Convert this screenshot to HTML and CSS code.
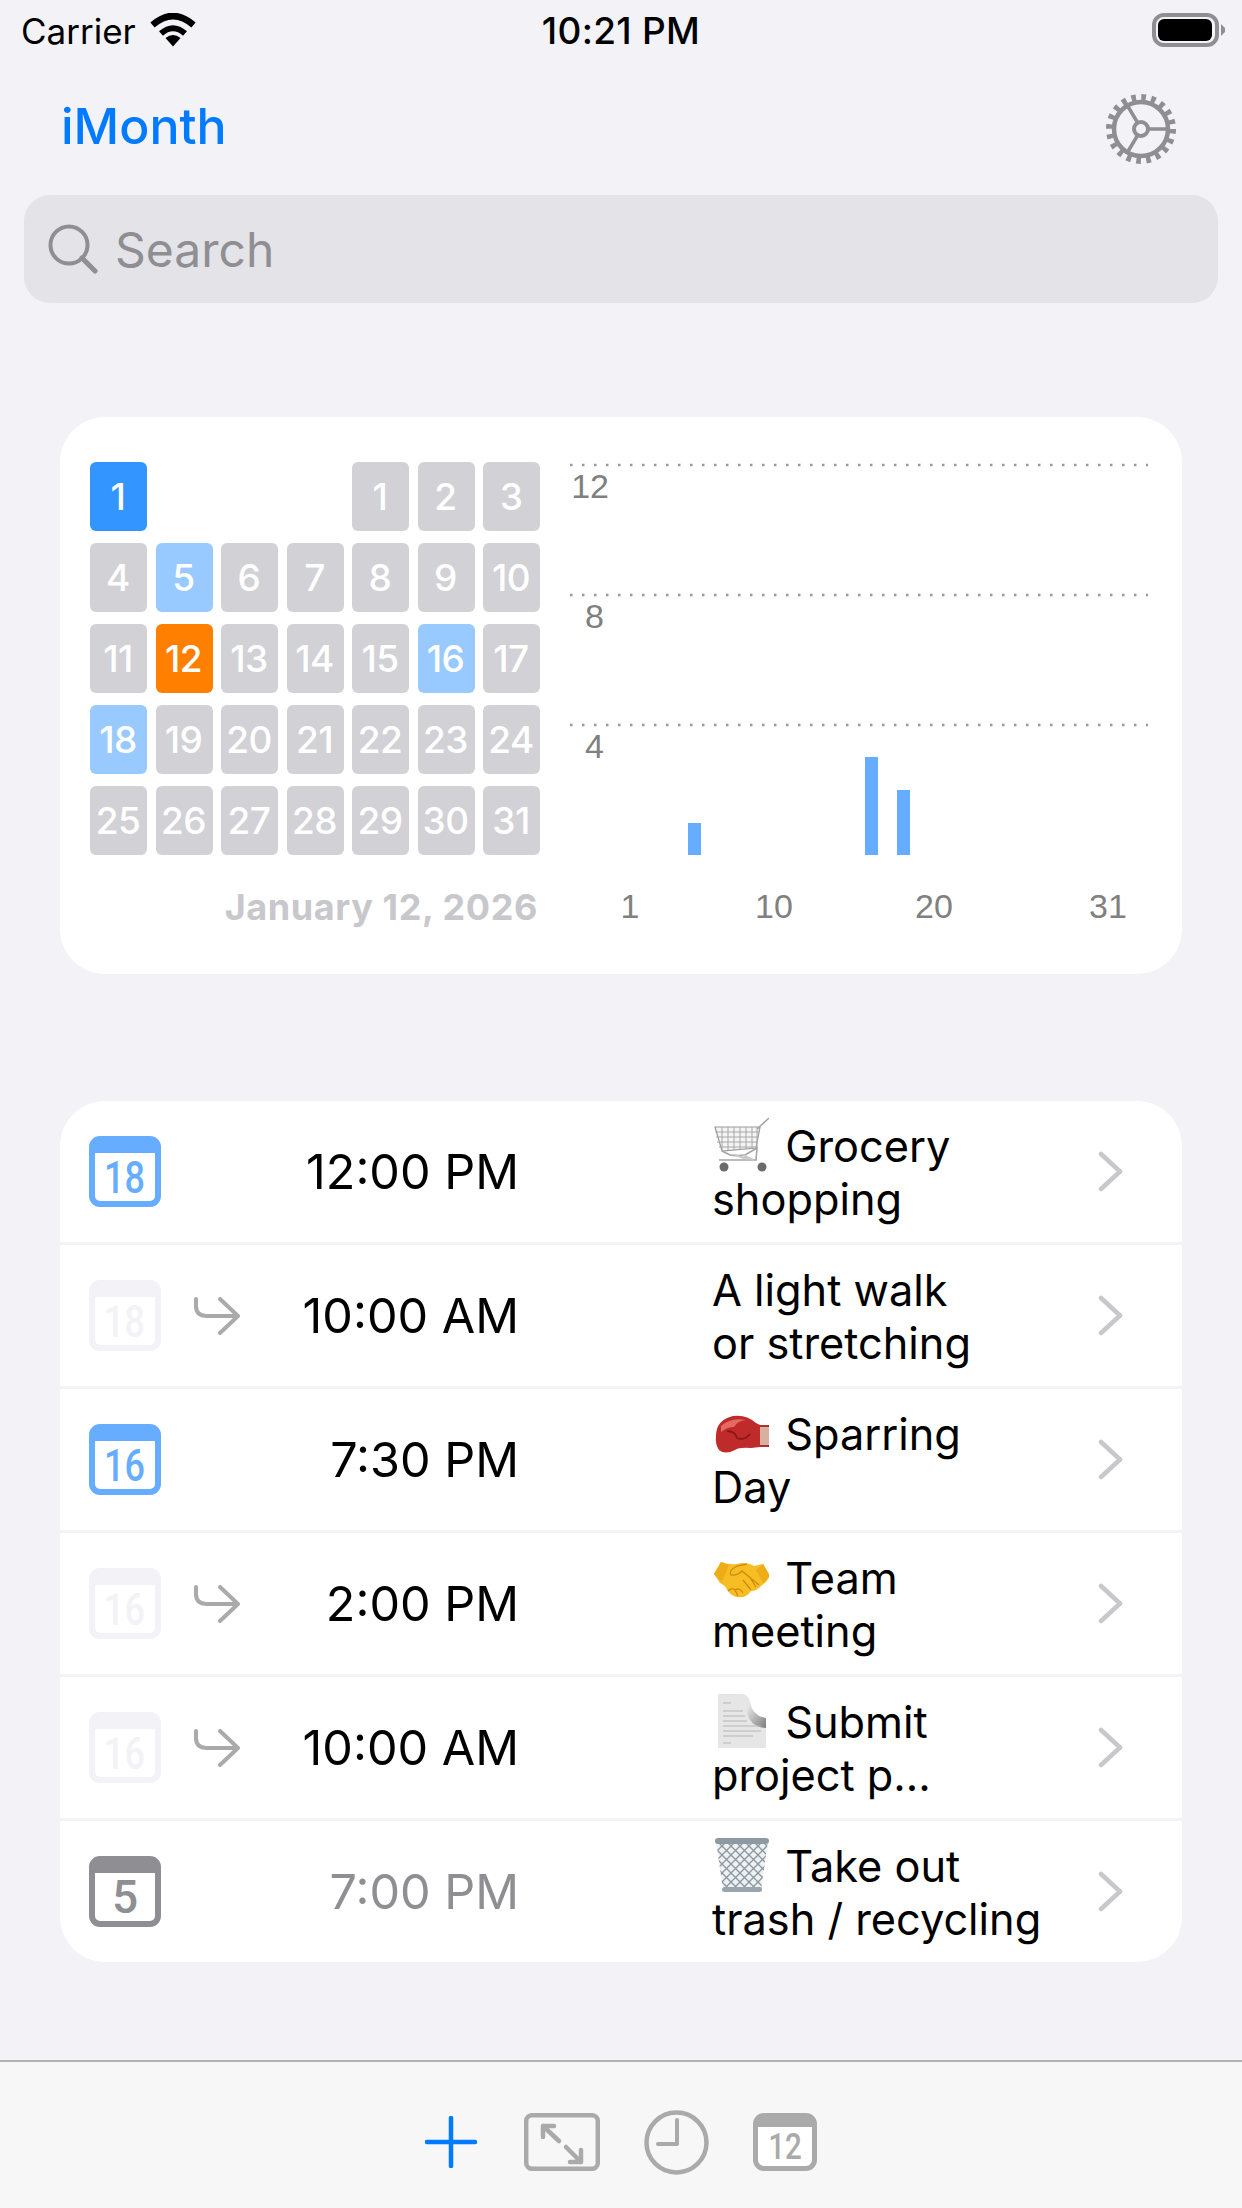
FILE: index.html
```html
<!DOCTYPE html>
<html>
    <head>
        <title>iMonth</title>
        <link rel="stylesheet" href="styles.css">
    </head>
    <body>
        <svg class="defs">
            <defs>
                <path id="chevron" d="M3 3 L22 20.5 L3 38" fill="none" stroke="#c7c7cc" stroke-width="4.5" stroke-linecap="round" stroke-linejoin="round"/>
                <path id="repeat" d="M3 2 V9 Q3 19 14 19 H44 M27 2 L45 19 L27 36" fill="none" stroke="#aaaaaa" stroke-width="4" stroke-linecap="round" stroke-linejoin="round"/>
                <pattern id="mesh" width="9" height="9" patternUnits="userSpaceOnUse">
                    <rect width="9" height="9" fill="#eef1f3"/>
                    <path d="M0 0 L9 9 M9 0 L0 9" stroke="#8a979e" stroke-width="1.3"/>
                </pattern>
                <linearGradient id="curl" x1="0" y1="0" x2="1" y2="1">
                    <stop offset="0" stop-color="#f2f2f2"/>
                    <stop offset="1" stop-color="#7d7d7d"/>
                </linearGradient>
            </defs>
        </svg>

        <div class="status-bar">
            <div class="status-left">
                <span>Carrier</span>
                <svg width="46" height="34" viewBox="0 0 46 34">
                    <path d="M2.5 12 Q23 -6 43.5 12" fill="none" stroke="#000" stroke-width="6.5"/>
                    <path d="M11 20.5 Q23 10 35 20.5" fill="none" stroke="#000" stroke-width="6"/>
                    <path d="M15.5 25 Q23 19 30.5 25 L23 33.5 Z" fill="#000"/>
                </svg>
            </div>
            <div class="status-time">10:21 PM</div>
            <svg class="battery" width="74" height="34" viewBox="0 0 74 34">
                <rect x="2" y="2" width="63" height="30" rx="10" fill="none" stroke="#8e8e93" stroke-width="4"/>
                <rect x="6" y="6" width="54" height="22" rx="6" fill="#000"/>
                <path d="M69 11 L73 15 V19 L69 23 Z" fill="#8e8e93"/>
            </svg>
        </div>

        <div class="nav-bar">
            <div class="nav-title">iMonth</div>
            <svg width="72" height="72" viewBox="-36 -36 72 72">
                <circle r="31.5" fill="none" stroke="#8e8e93" stroke-width="7" stroke-dasharray="4.6 5.3"/>
                <circle r="27" fill="none" stroke="#8e8e93" stroke-width="4.5"/>
                <circle r="7" fill="none" stroke="#8e8e93" stroke-width="4"/>
                <path d="M8 0 H27 M-3.5 -6.5 L-14.5 -25 M-3.5 6.5 L-14.5 25" fill="none" stroke="#8e8e93" stroke-width="3.5"/>
            </svg>
        </div>

        <div class="search">
            <svg width="50" height="50" viewBox="0 0 50 50">
                <circle cx="21" cy="21" r="18.5" fill="none" stroke="#8e8e93" stroke-width="4"/>
                <path d="M34 34 L47 47" stroke="#8e8e93" stroke-width="5" stroke-linecap="round"/>
            </svg>
            <span>Search</span>
        </div>

        <div class="summary">
            <div class="month">
                <div class="month-grid">
                    <div class="day day-week">1</div>
                    <div class="day-empty"></div>
                    <div class="day-empty"></div>
                    <div class="day-empty"></div>
                    <div class="day">1</div>
                    <div class="day">2</div>
                    <div class="day">3</div>
                    <div class="day">4</div>
                    <div class="day day-event">5</div>
                    <div class="day">6</div>
                    <div class="day">7</div>
                    <div class="day">8</div>
                    <div class="day">9</div>
                    <div class="day">10</div>
                    <div class="day">11</div>
                    <div class="day day-today">12</div>
                    <div class="day">13</div>
                    <div class="day">14</div>
                    <div class="day">15</div>
                    <div class="day day-event">16</div>
                    <div class="day">17</div>
                    <div class="day day-event">18</div>
                    <div class="day">19</div>
                    <div class="day">20</div>
                    <div class="day">21</div>
                    <div class="day">22</div>
                    <div class="day">23</div>
                    <div class="day">24</div>
                    <div class="day">25</div>
                    <div class="day">26</div>
                    <div class="day">27</div>
                    <div class="day">28</div>
                    <div class="day">29</div>
                    <div class="day">30</div>
                    <div class="day">31</div>
                </div>
                <div class="month-date">January 12, 2026</div>
            </div>
            <svg class="chart" width="612" height="512" viewBox="0 0 612 512">
                <path class="chart-line" d="M0 3 H578 M0 133 H578 M0 263 H578"/>
                <text class="chart-label" x="39" y="36" text-anchor="end">12</text>
                <text class="chart-label" x="34" y="166" text-anchor="end">8</text>
                <text class="chart-label" x="34" y="296" text-anchor="end">4</text>
                <rect class="chart-bar" x="118" y="361" width="13" height="32"/>
                <rect class="chart-bar" x="295" y="295" width="13" height="98"/>
                <rect class="chart-bar" x="327" y="328" width="13" height="65"/>
                <text class="chart-label" x="60" y="456" text-anchor="middle">1</text>
                <text class="chart-label" x="204" y="456" text-anchor="middle">10</text>
                <text class="chart-label" x="364" y="456" text-anchor="middle">20</text>
                <text class="chart-label" x="538" y="456" text-anchor="middle">31</text>
            </svg>
        </div>

        <div class="list">
            <div class="row">
                <div class="cal cal-blue"><span class="cal-narrow">18</span></div>
                <div class="repeat"></div>
                <div class="time">12:00 PM</div>
                <div class="title">
                    <svg class="emoji" viewBox="0 0 56 56">
                        <path d="M2 10 H47 L43 31 L9 34 Z" fill="#f4f4f4" stroke="#9a9a9a" stroke-width="1.2"/>
                        <path d="M2 15 H46 M3 20 H45 M4 25 H44 M6 30 H43 M9 10 V34 M15 10 V33 M21 10 V33 M27 10 V32 M33 10 V32 M39 10 V31 M44 10 V30" stroke="#a8a8a8" stroke-width="1"/>
                        <path d="M44 12 L56 1 M9 34 L17 38 Q24 39 32 38 L44 31 L43 43 H6" fill="none" stroke="#a5a5a5" stroke-width="1.6"/>
                        <path d="M30 38 L40 43 M22 38 L34 42" stroke="#c8c8c8" stroke-width="2"/>
                        <circle cx="11" cy="50" r="4.5" fill="#6b6b6b"/>
                        <circle cx="49" cy="50" r="4.5" fill="#6b6b6b"/>
                    </svg> Grocery<br>shopping
                </div>
                <svg class="chevron" width="25" height="41"><use href="#chevron"/></svg>
            </div>
            <div class="row">
                <div class="cal cal-faint"><span class="cal-narrow">18</span></div>
                <svg class="repeat" width="47" height="38"><use href="#repeat"/></svg>
                <div class="time">10:00 AM</div>
                <div class="title">A light walk<br>or stretching</div>
                <svg class="chevron" width="25" height="41"><use href="#chevron"/></svg>
            </div>
            <div class="row">
                <div class="cal cal-blue"><span class="cal-narrow">16</span></div>
                <div class="repeat"></div>
                <div class="time">7:30 PM</div>
                <div class="title">
                    <svg class="emoji" viewBox="0 0 56 56">
                        <path d="M45 21 H57 V41 H45 Z" fill="#d9b0a0" stroke="#a8322e" stroke-width="2"/>
                        <path d="M3 31 Q3 15 20 11 Q33 9 43 18 L47 20 V42 L38 43 Q26 42 22 45 Q12 50 6 45 Q2 39 3 31 Z" fill="#bf2a2a"/>
                        <path d="M8 21 Q18 12 33 15 Q24 16 21 22 Q14 22 8 27 Z" fill="#e46a62"/>
                        <path d="M14 26 Q22 26 24 33 Q31 36 37 29" fill="none" stroke="#8c1717" stroke-width="1.8"/>
                    </svg> Sparring<br>Day
                </div>
                <svg class="chevron" width="25" height="41"><use href="#chevron"/></svg>
            </div>
            <div class="row">
                <div class="cal cal-faint"><span class="cal-narrow">16</span></div>
                <svg class="repeat" width="47" height="38"><use href="#repeat"/></svg>
                <div class="time">2:00 PM</div>
                <div class="title">
                    <svg class="emoji" viewBox="0 0 56 56">
                        <path d="M1 25 L8 13 Q16 16 24 15 Q33 12 41 17 L50 15 L57 27 L53 33 L48 37 Q44 42 38 42 Q33 49 27 48 Q20 49 15 42 Q12 36 7 34 Z" fill="#f7bd24"/>
                        <path d="M1 25 L8 13 L16 16 L9 33 Z M50 15 L57 27 L50 34 L43 21 Z" fill="#eead18"/>
                        <path d="M34 15 L24 17 Q15 22 18 26 Q24 27 29 22 L46 36 M36 27 L43 38 M30 31 L38 41 M15 42 Q19 38 22 41 L25 47 M22 41 Q27 38 30 44" fill="none" stroke="#d08a0c" stroke-width="1.3"/>
                    </svg> Team<br>meeting
                </div>
                <svg class="chevron" width="25" height="41"><use href="#chevron"/></svg>
            </div>
            <div class="row">
                <div class="cal cal-faint"><span class="cal-narrow">16</span></div>
                <svg class="repeat" width="47" height="38"><use href="#repeat"/></svg>
                <div class="time">10:00 AM</div>
                <div class="title">
                    <svg class="emoji" viewBox="0 0 56 56">
                        <path d="M5 1 H29 Q35 1 37 9 Q39 23 53 25 V55 H5 Z" fill="#e6e6e6"/>
                        <path d="M37 9 Q39 23 53 25 V35 Q36 34 34 18 Z" fill="url(#curl)"/>
                        <path d="M10 10 H18 M10 18 H30 M10 23 H32 M10 28 H34 M10 33 H48 M10 38 H48 M10 43 H40 M10 50 H18" stroke="#b5b5b5" stroke-width="1.2"/>
                    </svg> Submit<br>project p...
                </div>
                <svg class="chevron" width="25" height="41"><use href="#chevron"/></svg>
            </div>
            <div class="row">
                <div class="cal cal-gray"><span class="cal-single">5</span></div>
                <div class="repeat"></div>
                <div class="time time-past">7:00 PM</div>
                <div class="title">
                    <svg class="emoji" viewBox="0 0 56 56">
                        <path d="M3 4 H55 L48 53 H10 Z" fill="url(#mesh)"/>
                        <rect x="2" y="1" width="54" height="6" rx="3" fill="#8d9aa2"/>
                        <rect x="9" y="50" width="40" height="5" rx="2.5" fill="#98a5ac"/>
                    </svg> Take out<br>trash / recycling
                </div>
                <svg class="chevron" width="25" height="41"><use href="#chevron"/></svg>
            </div>
        </div>

        <div class="toolbar">
            <svg width="52" height="52" viewBox="0 0 52 52">
                <path d="M26 2 V50 M2 26 H50" stroke="#007aff" stroke-width="4.5" stroke-linecap="round"/>
            </svg>
            <svg width="76" height="58" viewBox="0 0 76 58">
                <rect x="2.2" y="2.2" width="71.6" height="53.6" rx="6" fill="none" stroke="#aaaaaa" stroke-width="4.5"/>
                <path d="M19 24 V13 H30 M19 13 L35 28 M42 34 L57 49 M46 49 H57 V37" fill="none" stroke="#aaaaaa" stroke-width="4.5" stroke-linecap="round" stroke-linejoin="round"/>
            </svg>
            <svg width="65" height="65" viewBox="0 0 65 65">
                <circle cx="32.5" cy="32.5" r="30" fill="none" stroke="#aaaaaa" stroke-width="4.5"/>
                <path d="M33 10 V34 H14" fill="none" stroke="#aaaaaa" stroke-width="4" stroke-linecap="round" stroke-linejoin="round"/>
            </svg>
            <div class="cal cal-tool"><span class="cal-narrow">12</span></div>
        </div>
    </body>
</html>
```

FILE: styles.css
```css
* {
    box-sizing: border-box;
}

body {
    margin: 0;
    width: 1242px;
    height: 2208px;
    overflow: hidden;
    display: flex;
    flex-direction: column;
    background-color: #f2f2f7;
    font-family: Inter, "Liberation Sans", sans-serif;
    color: #000;
}

svg {
    display: block;
    flex-shrink: 0;
}

.defs {
    width: 0;
    height: 0;
    position: absolute;
}

/* status bar */
.status-bar {
    height: 62px;
    padding: 13px 16px 0 21px;
    display: grid;
    grid-template-columns: 1fr auto 1fr;
    align-items: start;
    font-size: 35px;
}

.status-left {
    display: flex;
    gap: 14px;
    line-height: 36px;
}

.status-time {
    margin-left: -5px;
    font-size: 37px;
    font-weight: 500;
    letter-spacing: 0.3px;
    line-height: 36px;
}

.battery {
    justify-self: end;
}

/* header */
.nav-bar {
    height: 133px;
    padding: 0 65px 0 61px;
    display: flex;
    justify-content: space-between;
    align-items: center;
}

.nav-title {
    padding-bottom: 5px;
    color: #007aff;
    font-size: 50px;
    font-weight: 500;
}

.search {
    height: 108px;
    margin: 0 24px;
    padding: 0 0 0 24px;
    border-radius: 26px;
    background-color: #e3e3e8;
    display: flex;
    align-items: center;
    gap: 17px;
    color: #8e8e93;
    font-size: 48px;
}

/* month summary card */
.summary {
    height: 557px;
    margin: 114px 60px 0;
    padding: 45px 0 0 30px;
    border-radius: 45px;
    background-color: #fff;
    display: flex;
    gap: 30px;
}

.month {
    width: 450px;
}

.month-grid {
    display: grid;
    grid-template-columns: repeat(7, 57px);
    grid-auto-rows: 69px;
    column-gap: 8.5px;
    row-gap: 12px;
}

.day {
    display: flex;
    align-items: center;
    justify-content: center;
    padding-right: 1px;
    border-radius: 6px;
    background-color: #d1d1d6;
    color: #fff;
    font-size: 37px;
    font-weight: 500;
    letter-spacing: -0.5px;
}

.day-week {
    background-color: #3395ff;
}

.day-event {
    background-color: #99caff;
}

.day-today {
    background-color: #ff8000;
}

.month-date {
    margin-top: 30px;
    padding-right: 2px;
    text-align: right;
    color: #c7c7cc;
    font-size: 36px;
    font-weight: 700;
    letter-spacing: 0.6px;
}

.chart-line {
    fill: none;
    stroke: #999;
    stroke-width: 2.5;
    stroke-dasharray: 2.5 9.5;
}

.chart-label {
    fill: #808080;
    font-family: "Liberation Sans", sans-serif;
    font-size: 34px;
}

.chart-bar {
    fill: #66adff;
}

/* event list */
.list {
    margin: 127px 60px 0;
    border-radius: 45px;
    background-color: #fff;
    overflow: hidden;
}

.row {
    height: 144px;
    padding-left: 29px;
    border-bottom: 3px solid #f2f2f7;
    display: flex;
    align-items: center;
}

.row:last-child {
    height: 141px;
    border-bottom: none;
}

.cal {
    width: 72px;
    height: 71px;
    border-style: solid;
    border-width: 17px 6px 6px;
    border-radius: 11px;
    background-color: #fff;
    display: flex;
    align-items: center;
    justify-content: center;
    flex-shrink: 0;
    font-family: Roboto, sans-serif;
    font-size: 45px;
    font-weight: 500;
    line-height: 1;
}

.cal-narrow {
    display: block;
    transform: scaleX(0.8);
}

.cal-single {
    display: block;
    font-size: 46px;
}

.cal-blue {
    border-color: #66adff;
    color: #66adff;
}

.cal-faint {
    border-color: #f2f2f7;
    color: #f2f2f7;
}

.cal-gray {
    border-color: #8e8e93;
    color: #8e8e93;
}

.cal-tool {
    width: 64px;
    height: 58px;
    border-width: 14px 5px 5px;
    border-color: #aaa;
    color: #aaa;
    font-size: 37px;
}

.repeat {
    width: 47px;
    height: 38px;
    margin-left: 32px;
    flex-shrink: 0;
}

.time {
    width: 279px;
    text-align: right;
    font-size: 48.5px;
    font-weight: 400;
}

.time-past {
    color: #8e8e93;
}

.title {
    width: 386px;
    margin-left: 193px;
    padding-top: 2px;
    font-size: 43.3px;
    line-height: 53px;
}

.emoji {
    display: inline-block;
    width: 56px;
    height: 56px;
    margin: -8px 4px -8px 1px;
    vertical-align: -3px;
}

.toolbar {
    height: 148px;
    margin-top: auto;
    padding-top: 14px;
    border-top: 2px solid #b2b2b2;
    background-color: #f7f7f8;
    display: flex;
    align-items: center;
    justify-content: center;
    gap: 44px;
}

.toolbar svg:first-child {
    margin-right: 3px;
}
```
